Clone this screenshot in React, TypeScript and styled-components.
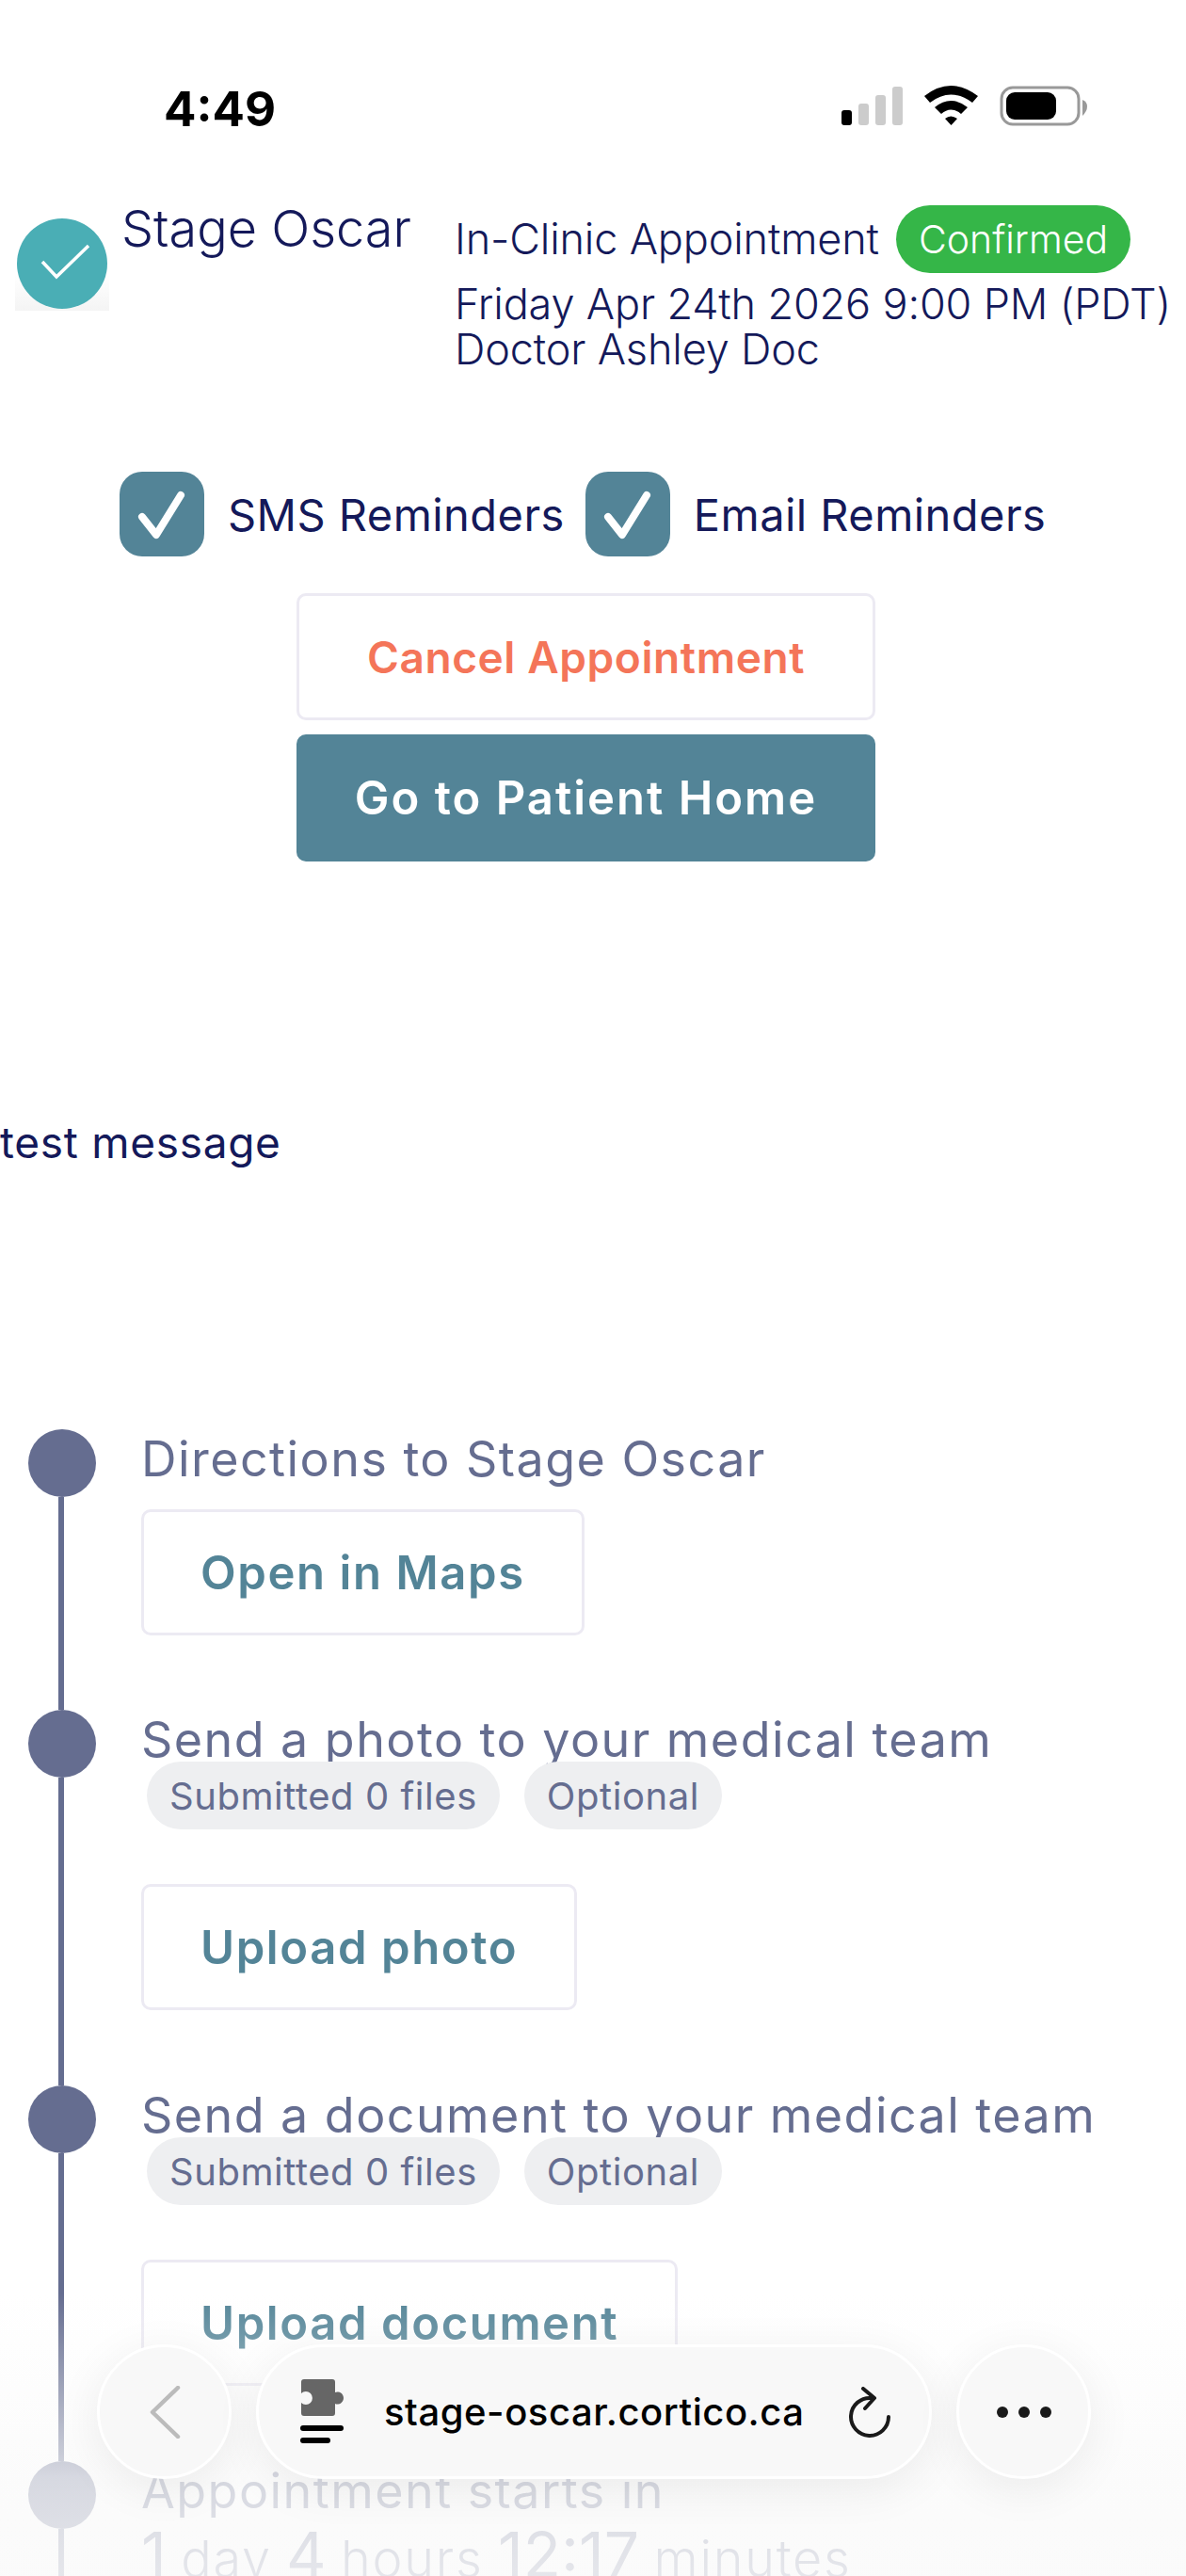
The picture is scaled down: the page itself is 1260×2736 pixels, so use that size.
import { ReactElement } from "react";
import styled, { createGlobalStyle } from "styled-components";

const NAVY = "#14195a";
const TEAL = "#538497";
const MUTED = "#656d90";
const BORDER = "#eceaf3";

const GlobalStyle = createGlobalStyle`
    html, body {
        margin: 0;
        padding: 0;
        background: #fff;
    }

    body {
        font-family: Inter, "Open Sans", sans-serif;
        color: ${NAVY};
    }
`;

const steps = [
    { title: "Directions to Stage Oscar", action: "Open in Maps", chips: [] as string[] },
    { title: "Send a photo to your medical team", action: "Upload photo", chips: ["Submitted 0 files", "Optional"] },
    { title: "Send a document to your medical team", action: "Upload document", chips: ["Submitted 0 files", "Optional"] },
];

export default function App(): ReactElement {
    return (
        <Page>
            <GlobalStyle />
            <StatusBar>
                <Clock>4:49</Clock>
                <StatusIcons width="270" height="50" viewBox="0 0 270 50">
                    <rect x="0" y="27" width="11" height="16" rx="3" fill="#000" />
                    <rect x="18" y="20" width="11" height="23" rx="3" fill="#ccc" />
                    <rect x="36" y="11" width="11" height="32" rx="3" fill="#ccc" />
                    <rect x="54" y="2" width="11" height="41" rx="3" fill="#ccc" />
                    <path d="M88 12 Q116 -10 145 12 L139 19 Q116 2 94 19 Z" fill="#000" />
                    <path d="M99 24 Q116 10 134 24 L127 31 Q116 22 106 31 Z" fill="#000" />
                    <path d="M110 36 Q116 31 123 36 L116.500 43 Z" fill="#000" />
                    <rect x="170" y="3" width="82" height="39" rx="12" fill="none" stroke="#999" strokeWidth="3" />
                    <rect x="175" y="8" width="53" height="29" rx="9" fill="#000" />
                    <path d="M256 16 Q261 18 261 23 Q261 28 256 33 Z" fill="#999" />
                </StatusIcons>
            </StatusBar>

            <Header>
                <Brand>
                    <LogoBox>
                        <svg width="96" height="96" viewBox="0 0 96 96">
                            <circle cx="48" cy="48" r="48" fill="#4aaeb5" />
                            <path d="M27 46 L42 62 L76 29" fill="none" stroke="#fff" strokeWidth="3.500" />
                        </svg>
                    </LogoBox>
                    <ClinicName>Stage Oscar</ClinicName>
                </Brand>
                <Details>
                    <TypeRow>
                        <DetailText>In-Clinic Appointment</DetailText>
                        <StatusPill>Confirmed</StatusPill>
                    </TypeRow>
                    <DetailText>Friday Apr 24th 2026 9:00 PM (PDT)</DetailText>
                    <DetailText>Doctor Ashley Doc</DetailText>
                </Details>
            </Header>

            <Reminders>
                <Reminder>
                    <CheckBox><CheckMark /></CheckBox>
                    SMS Reminders
                </Reminder>
                <Reminder>
                    <CheckBox><CheckMark /></CheckBox>
                    Email Reminders
                </Reminder>
            </Reminders>

            <Actions>
                <WideButton $tone="danger">Cancel Appointment</WideButton>
                <WideButton $tone="primary">Go to Patient Home</WideButton>
            </Actions>

            <Message>test message</Message>

            <Timeline>
                {steps.map((step, index) => (
                    <Step key={step.title} $height={index === 0 ? 298 : 399}>
                        <Rail>
                            <Dot />
                            <RailLine />
                        </Rail>
                        <StepBody>
                            <StepTitle>{step.title}</StepTitle>
                            {step.chips.length > 0 && (
                                <ChipRow>
                                    {step.chips.map(chip => <Chip key={chip}>{chip}</Chip>)}
                                </ChipRow>
                            )}
                            <OutlineButton $spaced={step.chips.length > 0}>{step.action}</OutlineButton>
                        </StepBody>
                    </Step>
                ))}
                <Step $height={298}>
                    <Rail>
                        <Dot />
                        <RailLine />
                    </Rail>
                    <StepBody>
                        <StepTitle>Appointment starts in</StepTitle>
                        <Countdown>
                            <b>1</b> day <b>4</b> hours <b>12:17</b> minutes
                        </Countdown>
                    </StepBody>
                </Step>
            </Timeline>

            <BottomFade />
            <BrowserBar>
                <RoundButton>
                    <svg width="34" height="56" viewBox="0 0 34 56">
                        <path d="M31 2 L4 28 L31 54" fill="none" stroke="#bbb" strokeWidth="4.500" strokeLinecap="round" strokeLinejoin="round" />
                    </svg>
                </RoundButton>
                <AddressPill>
                    <svg width="50" height="70" viewBox="0 0 50 70">
                        <path d="M1 3 Q1 0 4 0 H34 Q37 0 37 3 V14 A6.500 6.500 0 1 1 37 26 V36 Q37 39 34 39 H4 Q1 39 1 36 V25 A7 7 0 1 0 1 15 Z" fill="#666" />
                        <rect x="0" y="49" width="46" height="6" rx="3" fill="#000" />
                        <rect x="0" y="62" width="32" height="6" rx="3" fill="#000" />
                    </svg>
                    <Address>stage-oscar.cortico.ca</Address>
                    <svg width="48" height="54" viewBox="0 0 48 54">
                        <path d="M26 12 A20 20 0 1 0 44 32" fill="none" stroke="#1a1a1a" strokeWidth="4" strokeLinecap="round" />
                        <path d="M17 2 L29 12 L19 23" fill="none" stroke="#1a1a1a" strokeWidth="4" strokeLinecap="round" strokeLinejoin="round" />
                    </svg>
                </AddressPill>
                <RoundButton>
                    <svg width="60" height="14" viewBox="0 0 60 14">
                        <circle cx="7" cy="7" r="6" fill="#1a1a1a" />
                        <circle cx="30" cy="7" r="6" fill="#1a1a1a" />
                        <circle cx="53" cy="7" r="6" fill="#1a1a1a" />
                    </svg>
                </RoundButton>
            </BrowserBar>
        </Page>
    );
}

function CheckMark(): ReactElement {
    return (
        <svg width="54" height="54" viewBox="0 0 54 54">
            <path d="M6 30 L21 49 L47 7" fill="none" stroke="#fff" strokeWidth="8" strokeLinecap="round" strokeLinejoin="round" />
        </svg>
    );
}

const Page = styled.div`
    position: relative;
    width: 1260px;
    height: 2736px;
    overflow: hidden;
    background: #fff;
`;

const StatusBar = styled.div`
    display: flex;
    justify-content: space-between;
    align-items: center;
    height: 230px;
    padding: 0 96px 0 174px;
    box-sizing: border-box;
`;

const Clock = styled.div`
    font-size: 51px;
    font-weight: 700;
    color: #000;
`;

const StatusIcons = styled.svg`
    display: block;
`;

const Header = styled.div`
    display: flex;
    align-items: flex-start;
    padding-left: 16px;
`;

const Brand = styled.div`
    display: flex;
    align-items: flex-start;
    width: 467px;
`;

const LogoBox = styled.div`
    width: 100px;
    height: 98px;
    margin-top: 2px;
    display: flex;
    justify-content: center;
    background: linear-gradient(to bottom, #fff 60%, #f4f4f4);

    svg {
        display: block;
    }
`;

const ClinicName = styled.div`
    margin: -19px 0 0 13px;
    font-size: 54px;
    font-weight: 300;
    line-height: 64px;
    white-space: nowrap;
`;

const Details = styled.div`
    display: flex;
    flex-direction: column;
`;

const TypeRow = styled.div`
    display: flex;
    align-items: center;
    gap: 18px;
    margin: -12px 0 9px;
`;

const DetailText = styled.div`
    font-size: 45px;
    font-weight: 300;
    line-height: 48px;
    letter-spacing: -0.150px;
    white-space: nowrap;
`;

const StatusPill = styled.div`
    display: flex;
    align-items: center;
    height: 72px;
    padding: 0 24px;
    border-radius: 36px;
    background: #35b648;
    color: #fff;
    font-size: 41px;
    font-weight: 300;
`;

const Reminders = styled.div`
    display: flex;
    padding-left: 127px;
    gap: 22px;
    margin-top: 106px;
`;

const Reminder = styled.label`
    display: flex;
    align-items: center;
    gap: 25px;
    font-size: 47px;
    font-weight: 400;
    letter-spacing: 0.450px;
`;

const CheckBox = styled.span`
    display: flex;
    align-items: center;
    justify-content: center;
    width: 90px;
    height: 90px;
    border-radius: 24px;
    background: ${TEAL};
`;

const Actions = styled.div`
    display: flex;
    flex-direction: column;
    align-items: center;
    gap: 15px;
    width: 1245px;
    margin-top: 39px;
`;

const WideButton = styled.div<{ $tone: "danger" | "primary" }>`
    display: flex;
    align-items: center;
    justify-content: center;
    box-sizing: border-box;
    width: 615px;
    height: 135px;
    border-radius: 10px;
    font-weight: 600;
    font-size: ${p => (p.$tone === "primary" ? "49px" : "46px")};
    letter-spacing: ${p => (p.$tone === "primary" ? "2px" : "0.600px")};
    color: ${p => (p.$tone === "primary" ? "#fff" : "#f47559")};
    background: ${p => (p.$tone === "primary" ? TEAL : "#fff")};
    border: ${p => (p.$tone === "primary" ? "none" : `3px solid ${BORDER}`)};
`;

const Message = styled.div`
    margin-top: 270px;
    font-size: 46px;
    line-height: 56px;
    letter-spacing: 0.700px;
`;

const Timeline = styled.div`
    display: flex;
    flex-direction: column;
    margin-top: 277px;
    padding-left: 30px;
`;

const Step = styled.div<{ $height: number }>`
    display: grid;
    grid-template-columns: 72px 1fr;
    column-gap: 48px;
    height: ${p => p.$height}px;
`;

const Rail = styled.div`
    display: flex;
    flex-direction: column;
    align-items: center;
`;

const Dot = styled.div`
    flex: none;
    width: 72px;
    height: 72px;
    border-radius: 50%;
    background: ${MUTED};
`;

const RailLine = styled.div`
    flex: 1;
    width: 6px;
    margin-right: 2px;
    background: ${MUTED};
`;

const StepBody = styled.div`
    display: flex;
    flex-direction: column;
    align-items: flex-start;
`;

const StepTitle = styled.div`
    font-size: 52px;
    font-weight: 400;
    line-height: 64px;
    letter-spacing: 1.450px;
    color: ${MUTED};
    white-space: nowrap;
`;

const ChipRow = styled.div`
    display: flex;
    gap: 26px;
    margin: -9px 0 0 6px;
`;

const Chip = styled.div`
    display: flex;
    align-items: center;
    height: 72px;
    padding: 0 24px;
    border-radius: 36px;
    background: #eeeff1;
    color: ${MUTED};
    font-size: 40px;
    font-weight: 400;
    letter-spacing: 0.550px;
`;

const OutlineButton = styled.div<{ $spaced: boolean }>`
    display: flex;
    align-items: center;
    box-sizing: border-box;
    height: 134px;
    margin-top: ${p => (p.$spaced ? "58px" : "21px")};
    padding: 0 60px;
    border-radius: 10px;
    border: 3px solid ${BORDER};
    background: #fff;
    color: ${TEAL};
    font-size: 49px;
    font-weight: 600;
    letter-spacing: 1.600px;
`;

const Countdown = styled.div`
    font-size: 54px;
    font-weight: 300;
    line-height: 70px;
    letter-spacing: 1.700px;
    word-spacing: -1.500px;
    color: ${MUTED};
    white-space: nowrap;

    b {
        font-size: 66px;
        font-weight: 400;
        letter-spacing: 0;
    }
`;

const BottomFade = styled.div`
    position: absolute;
    left: 0;
    right: 0;
    bottom: 0;
    height: 300px;
    background: linear-gradient(
        to bottom,
        rgba(252, 252, 252, 0) 0%,
        rgba(250, 250, 250, 0.76) 65%,
        rgba(250, 250, 250, 0.86) 100%
    );
`;

const BrowserBar = styled.div`
    position: absolute;
    top: 2490px;
    left: 103px;
    width: 1056px;
    display: flex;
    gap: 26px;
`;

const RoundButton = styled.div`
    flex: none;
    display: flex;
    align-items: center;
    justify-content: center;
    box-sizing: border-box;
    width: 143px;
    height: 143px;
    border-radius: 50%;
    border: 3px solid #fff;
    background: #f8f8f8;
    box-shadow: 0 10px 50px rgba(0, 0, 0, 0.07);
`;

const AddressPill = styled.div`
    flex: 1;
    display: flex;
    align-items: center;
    box-sizing: border-box;
    height: 143px;
    padding: 0 39px 0 44px;
    border-radius: 72px;
    border: 3px solid #fff;
    background: #f8f8f8;
    box-shadow: 0 10px 50px rgba(0, 0, 0, 0.07);
`;

const Address = styled.div`
    flex: 1;
    margin-left: 39px;
    font-size: 40px;
    font-weight: 500;
    letter-spacing: 0.550px;
    color: #000;
    white-space: nowrap;
`;
